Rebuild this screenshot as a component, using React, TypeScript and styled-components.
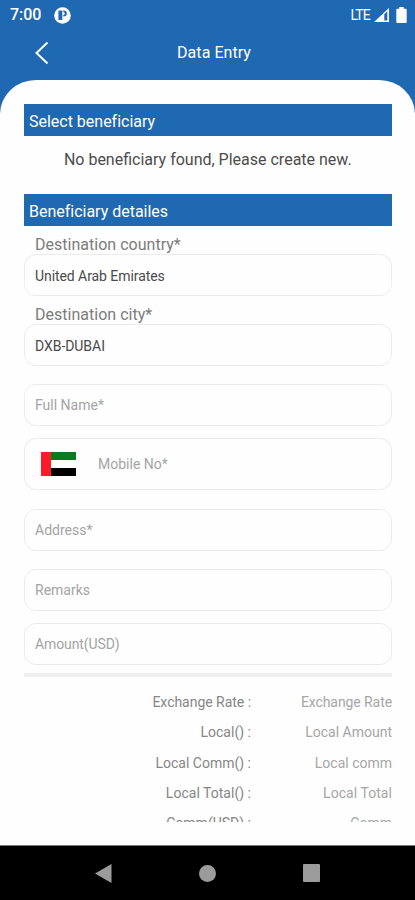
import React from "react";
import styled, { createGlobalStyle } from "styled-components";

const BLUE = "#1f68b2";

const GlobalStyle = createGlobalStyle`
  * { box-sizing: border-box; }
  body { margin: 0; background: #000; font-family: Roboto, sans-serif; }
`;

const Screen = styled.div`
  width: 415px;
  height: 900px;
  display: flex;
  flex-direction: column;
  background: ${BLUE};
  overflow: hidden;
`;

const StatusBar = styled.header`
  height: 30px;
  flex: none;
  display: flex;
  align-items: center;
  padding: 0 8px 0 10px;
  color: #fff;
`;

const Clock = styled.span`
  font-size: 16px;
  font-weight: 500;
  line-height: 30px;
  width: 44px;
  letter-spacing: -0.05px;
`;

const Network = styled.span`
  margin-left: auto;
  font-size: 14px;
  letter-spacing: -0.8px;
  line-height: 30px;
`;

const StatusIcon = styled.svg<{ $gap: number }>`
  display: block;
  flex: none;
  margin-left: ${(p) => p.$gap}px;
`;

const TitleBar = styled.div`
  height: 50px;
  flex: none;
  display: flex;
  align-items: center;
  padding-bottom: 4px;
`;

const BackButton = styled.button`
  width: 80px;
  border: 0;
  padding: 0 0 0 33px;
  background: none;
  display: flex;
`;

const Title = styled.h1`
  margin: 0;
  flex: 1;
  padding-right: 67px;
  text-align: center;
  color: #fff;
  font-size: 16px;
  font-weight: 400;
  line-height: 20px;
  letter-spacing: 0.05px;
`;

const Sheet = styled.main`
  height: 765px;
  flex: none;
  background: #fefefe;
  border-radius: 36px 36px 0 0 / 34px 34px 0 0;
  padding: 23.5px 23px 23px 23.5px;
`;

const ScrollArea = styled.div`
  height: 718.5px;
  overflow: hidden;
`;

const SectionBar = styled.h2`
  margin: 0;
  height: 32.5px;
  padding: 2px 0 0 5.5px;
  background: ${BLUE};
  color: #fff;
  font-size: 16px;
  font-weight: 400;
  line-height: 32px;
  letter-spacing: -0.01px;
`;

const Notice = styled.p`
  margin: 0;
  height: 57.5px;
  line-height: 48px;
  text-align: center;
  color: #4c4c4c;
  font-size: 16px;
`;

const FieldLabel = styled.label`
  display: flex;
  align-items: flex-end;
  height: 28px;
  padding-left: 11.5px;
  color: #7c7c7c;
  font-size: 16px;
  line-height: 18px;
  letter-spacing: 0.02px;
`;

const Field = styled.div<{ $height?: number; $top?: number; $value?: boolean; $spacing?: number }>`
  height: ${(p) => p.$height ?? 42}px;
  margin-top: ${(p) => p.$top ?? 0}px;
  border: 1.5px solid #ebebeb;
  border-radius: 12px;
  display: flex;
  align-items: center;
  padding: ${(p) => (p.$value ? 2 : 0)}px 0 0 10.5px;
  color: ${(p) => (p.$value ? "#4a4a4a" : "#a4a4a4")};
  font-size: 14px;
  letter-spacing: ${(p) => p.$spacing ?? 0}px;
`;

const Flag = styled.svg`
  display: block;
  margin: 0 22px 0 6px;
`;

const Divider = styled.hr`
  margin: 8px 0 0;
  border: 0;
  height: 4px;
  background: #eee;
`;

const Rates = styled.dl`
  margin: 10.5px 0 0;
  display: grid;
  grid-template-columns: 227.5px 1fr;
  grid-auto-rows: 30.3px;
  align-items: center;
  text-align: right;
  font-size: 14px;
`;

const RateName = styled.dt<{ $spacing: number }>`
  color: #868686;
  letter-spacing: ${(p) => p.$spacing}px;
`;

const RateValue = styled.dd<{ $spacing: number }>`
  margin: 0;
  color: #a6a6a6;
  letter-spacing: ${(p) => p.$spacing}px;
`;

const NavBar = styled.nav`
  flex: 1;
  background: #000;
  border-top: 1px solid #777;
  display: flex;
  justify-content: center;
  gap: 87px;
  align-items: center;
`;

const rates = [
  { name: "Exchange Rate :", value: "Exchange Rate", n: -0.03, v: -0.08 },
  { name: "Local() :", value: "Local Amount", n: 0.02, v: 0 },
  { name: "Local Comm() :", value: "Local comm", n: 0, v: 0 },
  { name: "Local Total() :", value: "Local Total", n: 0.02, v: 0.05 },
  { name: "Comm(USD) :", value: "Comm", n: 0, v: 0 },
];

export default function App() {
  return (
    <>
      <GlobalStyle />
      <Screen>
        <StatusBar>
          <Clock>7:00</Clock>
          <StatusIcon $gap={0} width="17" height="17" viewBox="0 0 17 17">
            <circle cx="8.5" cy="8.5" r="8.3" fill="#fff" />
            <path d="M4.400 4.500q0-1 1-1h2.900v9.500H4.400z" fill={BLUE} />
            <path d="M9.300 3.500h.5a3 3 0 0 1 0 6H9.300V8a1.500 1.500 0 0 0 0-3z" fill={BLUE} />
          </StatusIcon>
          <Network>LTE</Network>
          <StatusIcon $gap={4} width="15" height="14" viewBox="0 0 15 14">
            <path d="M0 14 15 0v14z" fill="#fff" />
            <path d="M10.300 6.200 13.300 3.300V12.500h-3z" fill={BLUE} />
          </StatusIcon>
          <StatusIcon $gap={7} width="11" height="16" viewBox="0 0 11 16">
            <path d="M3.300 0h4.400v1.700h2q1 0 1 1V15q0 1-1 1H1.300q-1 0-1-1V2.700q0-1 1-1h2z" fill="#fff" />
          </StatusIcon>
        </StatusBar>
        <TitleBar>
          <BackButton aria-label="Back">
            <svg width="17" height="24" viewBox="0 0 17 24">
              <path d="M14.500 1.500 3.500 12l11 10.500" fill="none" stroke="#fff" strokeWidth="2" />
            </svg>
          </BackButton>
          <Title>Data Entry</Title>
        </TitleBar>
        <Sheet>
          <ScrollArea>
            <SectionBar>Select beneficiary</SectionBar>
            <Notice>No beneficiary found, Please create new.</Notice>
            <SectionBar>Beneficiary detailes</SectionBar>
            <FieldLabel>Destination country*</FieldLabel>
            <Field $value $spacing={-0.07}>United Arab Emirates</Field>
            <FieldLabel>Destination city*</FieldLabel>
            <Field $value $spacing={-0.05}>DXB-DUBAI</Field>
            <Field $top={18}>Full Name*</Field>
            <Field $top={12} $height={52}>
              <Flag width="35" height="24" viewBox="0 0 35 24">
                <path d="M0 0h10v24H0z" fill="#fb1c2b" />
                <path d="M10 0h25v8H10z" fill="#087a20" />
                <path d="M10 8h25v8H10z" fill="#fff" />
                <path d="M10 16h25v8H10z" fill="#000" />
              </Flag>
              Mobile No*
            </Field>
            <Field $top={18.5}>Address*</Field>
            <Field $top={18}>Remarks</Field>
            <Field $top={12} $spacing={-0.1}>Amount(USD)</Field>
            <Divider />
            <Rates>
              {rates.map((r) => (
                <React.Fragment key={r.name}>
                  <RateName $spacing={r.n}>{r.name}</RateName>
                  <RateValue $spacing={r.v}>{r.value}</RateValue>
                </React.Fragment>
              ))}
            </Rates>
          </ScrollArea>
        </Sheet>
        <NavBar>
          <svg width="17" height="19" viewBox="0 0 17 19">
            <path d="M0 9.500 16.500 0v19z" fill="#9b9b9b" />
          </svg>
          <svg width="17" height="17" viewBox="0 0 17 17">
            <circle cx="8.500" cy="8.500" r="8.500" fill="#9b9b9b" />
          </svg>
          <svg width="17" height="18" viewBox="0 0 17 18">
            <rect width="17" height="18" rx="1" fill="#9b9b9b" />
          </svg>
        </NavBar>
      </Screen>
    </>
  );
}
